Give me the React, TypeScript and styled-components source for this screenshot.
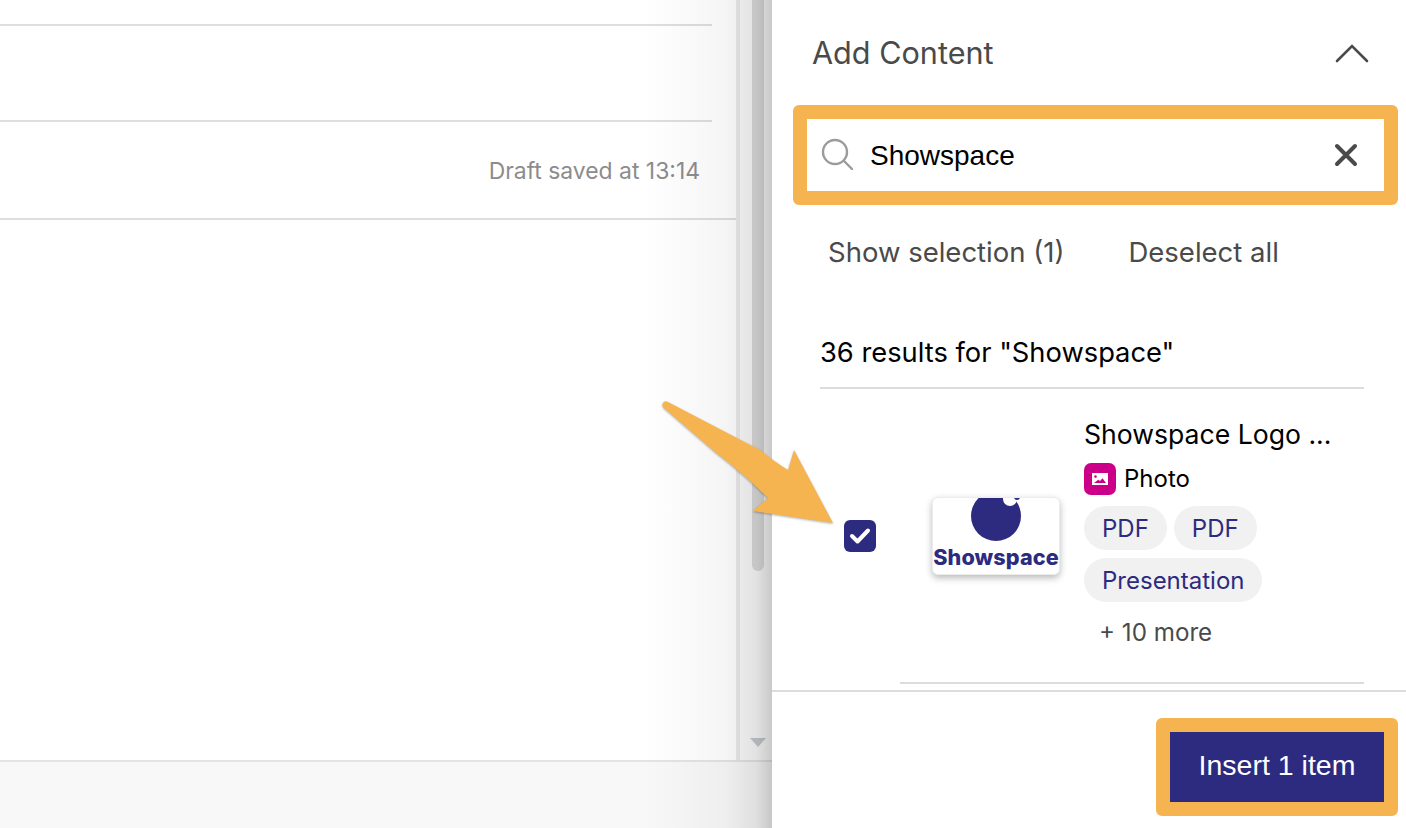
import styled, { createGlobalStyle } from 'styled-components';

const navy = '#2d2b80';
const amber = '#f5b44f';

const Global = createGlobalStyle`
    html, body {
        margin: 0;
        padding: 0;
        background: #fff;
    }
    body {
        font-family: Inter, "Liberation Sans", sans-serif;
    }
`;

const Page = styled.div`
    position: relative;
    display: flex;
    width: 1406px;
    height: 828px;
    overflow: hidden;
`;

const Pane = styled.div`
    position: relative;
    display: flex;
    flex-direction: column;
    width: 772px;
    flex-shrink: 0;

    &::after {
        content: '';
        position: absolute;
        top: 0;
        bottom: 0;
        right: 0;
        width: 130px;
        pointer-events: none;
        background: linear-gradient(90deg, rgba(0, 0, 0, 0) 0%, rgba(0, 0, 0, 0.04) 65%, rgba(0, 0, 0, 0.1) 88%, rgba(0, 0, 0, 0.2) 100%);
    }
`;

const Main = styled.div`
    display: flex;
    flex: 1;
    min-height: 0;
`;

const Content = styled.div`
    flex: 1;
    display: flex;
    flex-direction: column;
`;

const Row = styled.div<{ $height: number }>`
    height: ${(p) => p.$height}px;
    margin-right: 24px;
    border-bottom: 2px solid #dedede;
`;

const DraftRow = styled.div`
    height: 98px;
    padding: 2px 36px 0 0;
    box-sizing: border-box;
    border-bottom: 2px solid #dedede;
    display: flex;
    justify-content: flex-end;
    align-items: center;
    font-size: 22.9px;
    color: #8c8c8c;
`;

const Scrollbar = styled.div`
    width: 36px;
    box-sizing: border-box;
    border-left: 4px solid #eaeaea;
    background: #fbfbfb;
    display: flex;
    flex-direction: column;
`;

const Thumb = styled.div`
    width: 12px;
    height: 571px;
    margin-left: 12px;
    border-radius: 0 0 6px 6px;
    background: #dcdcdc;
`;

const ScrollArrow = styled.div`
    width: 0;
    height: 0;
    margin: 167px 0 0 10px;
    border-left: 8px solid transparent;
    border-right: 8px solid transparent;
    border-top: 9px solid #c3cacf;
`;

const BottomBar = styled.div`
    height: 66px;
    border-top: 2px solid #e4e4e4;
    background: #f8f8f8;
`;

const Panel = styled.div`
    flex: 1;
    position: relative;
    display: flex;
    flex-direction: column;
    background: #fff;
`;

const Header = styled.div`
    height: 105px;
    box-sizing: border-box;
    padding: 0 36px 0 40px;
    display: flex;
    justify-content: space-between;
    align-items: center;
`;

const Title = styled.div`
    font-size: 30.6px;
    color: #4a4a4a;
`;

const Search = styled.div`
    width: 605px;
    height: 100px;
    margin-left: 21px;
    box-sizing: border-box;
    border: 14px solid ${amber};
    border-radius: 6px;
    padding: 0 26px 0 13px;
    display: flex;
    align-items: center;
`;

const SearchText = styled.div`
    flex: 1;
    margin: 2px 0 0 16px;
    font-family: 'Liberation Sans', sans-serif;
    font-size: 28px;
    color: #000;
`;

const Selection = styled.div`
    height: 93px;
    box-sizing: border-box;
    padding-left: 56px;
    display: flex;
    gap: 64px;
    align-items: center;
    font-size: 27.5px;
    color: #4a4a4a;
`;

const Results = styled.div`
    height: 91px;
    box-sizing: border-box;
    margin: 0 42px 0 48px;
    padding-top: 20px;
    border-bottom: 2px solid #dcdcdc;
    display: flex;
    align-items: center;
    font-size: 27.3px;
    color: #000;
`;

const Item = styled.div`
    height: 295px;
    box-sizing: border-box;
    margin: 0 42px 0 128px;
    border-bottom: 2px solid #dcdcdc;
    position: relative;
    display: flex;
    align-items: flex-start;
`;

const Checkbox = styled.div`
    position: absolute;
    left: -56px;
    top: 131px;
    width: 32px;
    height: 32px;
    border-radius: 6px;
    background: ${navy};
    display: flex;
    align-items: center;
    justify-content: center;
`;

const Thumbnail = styled.div`
    width: 128px;
    height: 78px;
    margin: 108px 24px 0 32px;
    flex-shrink: 0;
    box-sizing: border-box;
    border-radius: 6px;
    background: #fff;
    border: 1px solid #ececec;
    box-shadow: 0 3px 7px rgba(0, 0, 0, 0.28);
    overflow: hidden;
    display: flex;
    flex-direction: column;
    align-items: center;
`;

const LogoText = styled.div`
    margin-top: 2px;
    font-size: 21.6px;
    line-height: 26px;
    font-weight: 800;
    letter-spacing: 0.1px;
    color: ${navy};
    white-space: nowrap;
`;

const Info = styled.div`
    display: flex;
    flex-direction: column;
    padding-top: 29px;
`;

const ItemTitle = styled.div`
    font-size: 26.6px;
    line-height: 33px;
    color: #000;
    white-space: nowrap;
`;

const TypeRow = styled.div`
    margin-top: 12px;
    display: flex;
    align-items: center;
    gap: 8px;
    font-size: 24px;
    line-height: 30px;
    height: 32px;
    color: #000;
`;

const TypeIcon = styled.div`
    width: 32px;
    height: 32px;
    border-radius: 7px;
    background: #cc0088;
    display: flex;
    align-items: center;
    justify-content: center;
`;

const Tags = styled.div`
    width: 200px;
    margin-top: 11px;
    display: flex;
    flex-wrap: wrap;
    gap: 8px 7px;
`;

const Tag = styled.div`
    height: 44px;
    padding: 0 18px;
    border-radius: 22px;
    background: #f1f1f1;
    display: flex;
    align-items: center;
    font-size: 24px;
    color: ${navy};
`;

const More = styled.div`
    margin: 16px 0 0 15px;
    font-size: 24.2px;
    color: #4a4a4a;
`;

const Footer = styled.div`
    flex: 1;
    margin-top: 6px;
    border-top: 2px solid #dcdcdc;
    display: flex;
    justify-content: flex-end;
    padding: 26px 8px 0 0;
`;

const InsertFrame = styled.div`
    width: 242px;
    height: 98px;
    box-sizing: border-box;
    border: 14px solid ${amber};
    border-radius: 6px;
`;

const InsertButton = styled.div`
    height: 100%;
    padding-bottom: 4px;
    box-sizing: border-box;
    background: ${navy};
    color: #fff;
    display: flex;
    align-items: center;
    justify-content: center;
    font-family: 'Liberation Sans', sans-serif;
    font-size: 28.5px;
`;

const Callout = styled.svg`
    position: absolute;
    left: 650px;
    top: 395px;
    filter: drop-shadow(0 1px 1px rgba(0, 0, 0, 0.3));
`;

export default function App() {
    return (
        <Page>
            <Global />
            <Pane>
                <Main>
                    <Content>
                        <Row $height={24} />
                        <Row $height={94} />
                        <DraftRow>Draft saved at 13:14</DraftRow>
                    </Content>
                    <Scrollbar>
                        <Thumb />
                        <ScrollArrow />
                    </Scrollbar>
                </Main>
                <BottomBar />
            </Pane>

            <Panel>
                <Header>
                    <Title>Add Content</Title>
                    <svg width="36" height="24" viewBox="0 0 36 24" fill="none" stroke="#4a4a4a" strokeWidth="2.6" strokeLinecap="round">
                        <path d="M3 20 L18 5 L33 20" />
                    </svg>
                </Header>

                <Search>
                    <svg width="34" height="34" viewBox="0 0 34 34" fill="none" stroke="#9b9b9b" strokeWidth="2.4" strokeLinecap="round">
                        <circle cx="15" cy="14" r="12" />
                        <path d="M24 23 L32 31" />
                    </svg>
                    <SearchText>Showspace</SearchText>
                    <svg width="24" height="24" viewBox="0 0 24 24" fill="none" stroke="#4a4a4a" strokeWidth="4" strokeLinecap="round">
                        <path d="M3 3 L21 21 M21 3 L3 21" />
                    </svg>
                </Search>

                <Selection>
                    <span>Show selection (1)</span>
                    <span>Deselect all</span>
                </Selection>

                <Results>36 results for "Showspace"</Results>

                <Item>
                    <Checkbox>
                        <svg width="22" height="18" viewBox="0 0 22 18" fill="none" stroke="#fff" strokeWidth="4" strokeLinecap="round" strokeLinejoin="round">
                            <path d="M3 9 L8.5 14.5 L19 3.5" />
                        </svg>
                    </Checkbox>
                    <Thumbnail>
                        <svg width="126" height="44" viewBox="0 0 126 44">
                            <circle cx="63" cy="18" r="25" fill={navy} />
                            <circle cx="77" cy="1" r="7" fill="#fff" />
                            <circle cx="84" cy="-1" r="3" fill={navy} />
                        </svg>
                        <LogoText>Showspace</LogoText>
                    </Thumbnail>
                    <Info>
                        <ItemTitle>Showspace Logo ...</ItemTitle>
                        <TypeRow>
                            <TypeIcon>
                                <svg width="16" height="12" viewBox="0 0 16 12">
                                    <path fill="#fff" fillRule="evenodd" d="M0 0H16V12H0Z M3.5 2.2a1.3 1.3 0 1 0 0.01 0Z M2 10H14L10.5 5.2 8 8 6.3 6.8Z" />
                                </svg>
                            </TypeIcon>
                            Photo
                        </TypeRow>
                        <Tags>
                            <Tag>PDF</Tag>
                            <Tag>PDF</Tag>
                            <Tag>Presentation</Tag>
                        </Tags>
                        <More>+ 10 more</More>
                    </Info>
                </Item>

                <Footer>
                    <InsertFrame>
                        <InsertButton>Insert 1 item</InsertButton>
                    </InsertFrame>
                </Footer>
            </Panel>

            <Callout width="190" height="135" viewBox="650 395 190 135">
                <path
                    fill={amber}
                    d="M663 403 Q665 400 668 402 L760 450 Q775 462 788 470 L794 450 L833 523 L753 511 L768 498 Q745 475 715 452 L665 409 Q661 406 663 403Z"
                />
            </Callout>
        </Page>
    );
}
